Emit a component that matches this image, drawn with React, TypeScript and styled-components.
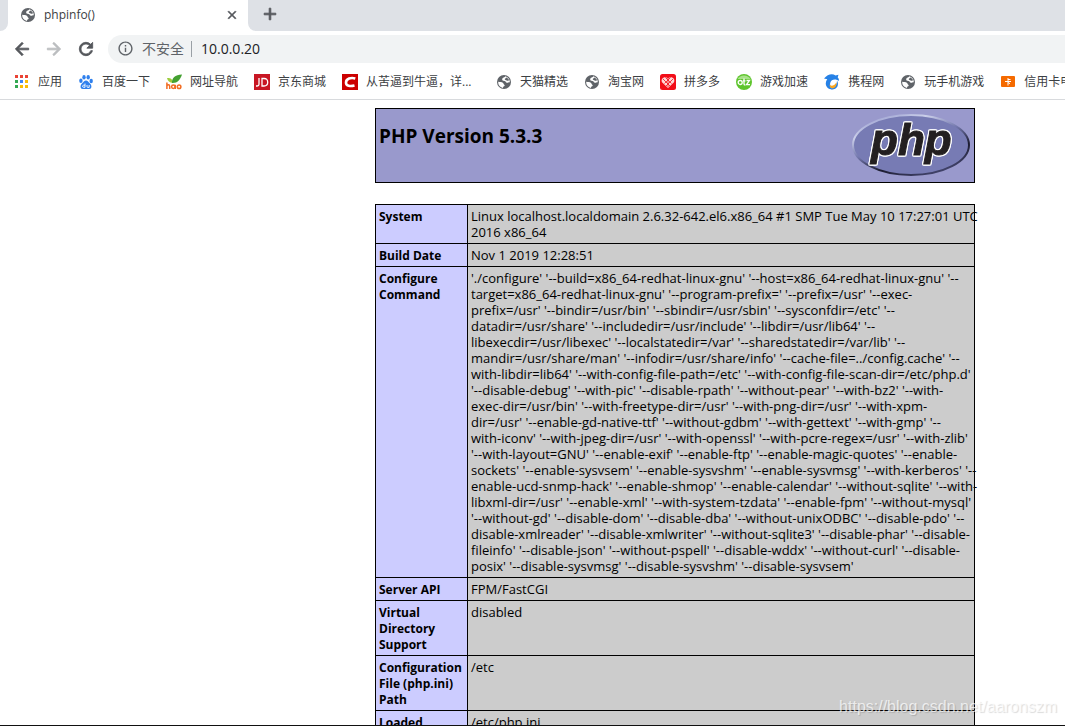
import React from 'react';
import styled, { createGlobalStyle } from 'styled-components';
import { MdArrowBack, MdArrowForward, MdRefresh, MdInfoOutline, MdClose, MdAdd } from 'react-icons/md';

const GlobalStyle = createGlobalStyle`
  * { box-sizing: border-box; }
  body {
    margin: 0;
    background: #fff;
    color: #000;
    font-family: "Open Sans", "Noto Sans CJK SC", sans-serif;
    overflow: hidden;
  }
`;

const Browser = styled.div`
  position: relative;
  display: flex;
  flex-direction: column;
  height: 100vh;
  overflow: hidden;
  border-bottom: 1px solid #111;
`;

const TabStrip = styled.div`
  display: flex;
  flex: none;
  height: 31px;
  background: #fff;
`;

const StripStart = styled.div`
  flex: none;
  width: 8px;
  border-bottom-right-radius: 8px;
  background: #dee1e6;
`;

const StripRest = styled.div`
  display: flex;
  flex: 1;
  padding-left: 6px;
  border-bottom-left-radius: 8px;
  background: #dee1e6;
`;

const Tab = styled.div`
  display: flex;
  align-items: center;
  flex: none;
  width: 240px;
  padding: 0 8px 2px 12px;
  background: #fff;
  font-size: 12px;
  color: #3c4043;
`;

const TabTitle = styled.span`
  flex: 1;
  margin-left: 8px;
`;

const IconButton = styled.button<{ $size?: number; $color?: string }>`
  display: flex;
  align-items: center;
  justify-content: center;
  flex: none;
  width: ${(p) => p.$size ?? 32}px;
  height: ${(p) => p.$size ?? 32}px;
  padding: 0;
  border: 0;
  background: none;
  color: ${(p) => p.$color ?? '#54575b'};

  path:not([fill="none"]) {
    stroke: currentColor;
    stroke-width: 1px;
  }
`;

const NewTab = styled(IconButton)`
  height: 28px;
`;

const Toolbar = styled.div`
  display: flex;
  align-items: center;
  flex: none;
  height: 36px;
  padding-left: 6px;
`;

const AddressBar = styled.div`
  display: flex;
  align-items: center;
  flex: 1;
  height: 28px;
  margin-left: 6px;
  padding: 0 0 1px 9px;
  border-radius: 14px 0 0 14px;
  background: #f1f3f4;
  color: #5f6368;
  font-size: 14px;
`;

const Security = styled.span`
  margin-left: 8px;
  padding-right: 7px;
  border-right: 1px solid #9aa0a6;
  line-height: 16px;
`;

const Address = styled.input`
  flex: 1;
  min-width: 0;
  padding: 0 0 0 9px;
  border: 0;
  outline: 0;
  background: none;
  color: #202124;
  font: inherit;
`;

const Bookmarks = styled.nav`
  display: flex;
  align-items: center;
  flex: none;
  gap: 16px;
  height: 33px;
  padding: 0 0 2px 14px;
  border-bottom: 1px solid #d8dadd;
  overflow: hidden;
`;

const Bookmark = styled.a<{ $width?: number }>`
  display: flex;
  align-items: center;
  flex: none;
  gap: 8px;
  width: ${(p) => (p.$width ? `${p.$width}px` : 'auto')};
  color: #3c4043;
  font-size: 12px;
  line-height: 16px;
  text-decoration: none;
  white-space: nowrap;
`;

const Page = styled.main`
  flex: 1;
  min-height: 0;
  padding: 8px 0 0 375px;
  overflow: hidden;
  font-size: 13px;
  line-height: 16px;
`;

const Banner = styled.header`
  display: flex;
  justify-content: space-between;
  align-items: flex-start;
  width: 600px;
  height: 75px;
  margin-bottom: 21px;
  padding: 3px;
  border: 1px solid #000;
  background: #9999cc;
`;

const Title = styled.h1`
  margin: 12px 0 0;
  font-size: 19px;
  line-height: 24px;
`;

const LogoText = styled.text`
  font-family: "Liberation Sans", sans-serif;
  font-size: 44px;
  font-weight: bold;
  font-style: italic;
  fill: #231f20;
  stroke: #231f20;
  stroke-width: 1px;
  filter: drop-shadow(1px 0 0 #fff) drop-shadow(-1px 0 0 #fff) drop-shadow(0 1px 0 #fff) drop-shadow(0 -1px 0 #fff);
`;

const InfoTable = styled.table`
  width: 600px;
  border-collapse: collapse;
  table-layout: fixed;
`;

const Name = styled.th`
  width: 92px;
  padding: 4px 3px 2px;
  border: 1px solid #000;
  background: #ccccff;
  font-size: 12px;
  text-align: left;
  vertical-align: top;
  white-space: pre;
`;

const Value = styled.td`
  padding: 3px;
  border: 1px solid #000;
  background: #cccccc;
  vertical-align: top;
  white-space: pre;
`;

const Watermark = styled.div`
  position: absolute;
  right: 8px;
  bottom: 8px;
  color: rgba(255, 255, 255, 0.7);
  font-family: "Liberation Sans", sans-serif;
  font-size: 16px;
  line-height: 20px;
  text-shadow: 1px 1px 1px rgba(0, 0, 0, 0.15);
`;

const Globe = () => (
  <svg width="16" height="16" viewBox="0 0 16 16">
    <circle cx="8" cy="8" r="7" fill="#5f6368" />
    <path
      d="M9.500 2.300C8.800 3.800 6.500 3.200 6.200 5c-.2 1.500.7 1.900 2.200 1.900 1.600.1 1.200 1.600 2.600 1.900 1.200.2 1.500-.8 2.800-.6.100-2.700-1.600-5-4.300-5.900z"
      fill="#fff"
    />
    <path d="M10.200 3.600c-.2 1.100-1.500.9-1.400 1.800.1.700 1.300.4 1.800 1 .5.500 1.500.3 2.600.2-.5-1.400-1.500-2.400-3-3z" fill="#5f6368" />
    <path d="M2.200 7.800c1.900.4 3.600.2 4.600 1 .9.700.6 1.500 1.500 1.900.9.500.2 1.500-.7 1.800-.6.300-.3.900-.7 1.400C4 13.300 2 11 2.200 7.800z" fill="#fff" />
  </svg>
);

const Apps = () => (
  <svg width="16" height="16" viewBox="0 0 16 16">
    {['#ea4335', '#ea4335', '#ea4335', '#34a853', '#4285f4', '#fbbc05', '#34a853', '#fbbc05', '#fbbc05'].map((c, i) => (
      <rect key={i} x={1 + (i % 3) * 5} y={1 + Math.floor(i / 3) * 5} width="3" height="3" fill={c} />
    ))}
  </svg>
);

const Baidu = () => (
  <svg width="16" height="16" viewBox="0 0 16 16" fill="#2f80ed">
    <ellipse cx="2.900" cy="6.700" rx="1.700" ry="2.200" />
    <ellipse cx="6" cy="3.300" rx="1.700" ry="2.300" />
    <ellipse cx="10.200" cy="3.300" rx="1.700" ry="2.300" />
    <ellipse cx="13.200" cy="7" rx="1.700" ry="2.200" />
    <path d="M8 6.500c1.800 0 2.500 1.700 4 3 2 1.700 2 5.500-.8 5.500H4.800C2 15 2 11.200 4 9.500c1.500-1.300 2.200-3 4-3z" />
    <path d="M7 9.500v3.800H5.500c-1.200 0-1.200-2.100 0-2.100H7M9 11v1.700q0 .7 1 .7h1.200V11" stroke="#fff" strokeWidth=".9" fill="none" />
  </svg>
);

const Hao = () => (
  <svg width="16" height="16" viewBox="0 0 16 16">
    <path d="M1 4c3.500-.2 5.500 1 6 5C3.500 8.500 1.700 7 1 4z" fill="#9ccc3c" />
    <path d="M16 .5C9 1 5.500 4 6 9c5.500.3 8-3 10-8.500z" fill="#43a030" />
    <g fill="none" stroke="#f26c22" strokeWidth="1.500">
      <path d="M.9 8.500v6.500M.9 12.500q0-1.700 1.400-1.700t1.400 1.700v2.500" />
      <circle cx="7.300" cy="12.800" r="1.700" />
      <path d="M9.300 10.800v4.200" />
      <circle cx="13.100" cy="12.800" r="1.800" />
    </g>
  </svg>
);

const Jd = () => (
  <svg width="16" height="16" viewBox="0 0 16 16">
    <rect width="16" height="16" fill="#c81623" />
    <path d="M2 12h1.200q1.800 0 1.800-1.800V4M8 4.500v7.500h2q3.700 0 3.700-3.800T10 4.500z" fill="none" stroke="#fff" strokeWidth="1.300" />
  </svg>
);

const Csdn = () => (
  <svg width="16" height="16" viewBox="0 0 16 16">
    <rect width="16" height="16" fill="#cc0000" />
    <path d="M13.300 4.500C9 3.300 4 4.500 4 8.700c0 3.500 4.500 3.800 8.500 2.800" fill="none" stroke="#fff" strokeWidth="2.600" />
  </svg>
);

const Pdd = () => (
  <svg width="16" height="16" viewBox="0 0 16 16">
    <rect width="16" height="16" rx="2.500" fill="#f20d18" />
    <path d="M8 14 2 8.200C.5 5 4 1.500 8 4.200 12 1.500 15.500 5 14 8.200z" fill="#ffd6d6" />
    <path d="m3 5 7 7M5.500 3.500l6 6M13 5l-7 7M10.500 3.500l-6 6M8 4v9" stroke="#f20d18" strokeWidth=".8" />
  </svg>
);

const Game = () => (
  <svg width="16" height="16" viewBox="0 0 16 16">
    <circle cx="8" cy="8" r="8" fill="#5fc52e" />
    <path d="M1.500 5a7.500 7 0 0 1 13 0z" fill="#a8e28a" />
    <g fill="none" stroke="#fff" strokeWidth="1.300">
      <circle cx="4.200" cy="8.500" r="2" />
      <path d="M8 4.500v5.500q0 1 1.200 1M6.800 6.800h2.700M10.500 6.500h3l-3 4.200h3.500" />
    </g>
  </svg>
);

const Ctrip = () => (
  <svg width="16" height="16" viewBox="0 0 16 16">
    <path d="M0 4.500C3.500.5 8-1 11.500 1.500l3-.8-.8 2.600q1.500 1.500 1.300 3.700C12 4.500 7 5 6.200 9c-.4 2.800.6 4.700 2.300 6.500C4 15.500 1.500 12.500 1.800 9q.1-2 1.500-3.800z" fill="#2681e6" />
    <path d="M13 6.500c2.500 4.500 0 9-5 9l-2-1c4 0 7-3 7-8z" fill="#2681e6" />
    <path d="M5.500 10.500q3 3.500 7-2c.3 4-2 5.800-4 5.800s-3-1.800-3-3.800z" fill="#f9a620" />
    <circle cx="9" cy="9" r="1.800" fill="#fff" />
  </svg>
);

const Card = () => (
  <svg width="16" height="16" viewBox="0 0 16 16">
    <rect x="1" y="2" width="14" height="11" rx="1" fill="#f56a00" />
    <path d="M8 4v7.500M8 5.500h2.500M5 7.500h6M8 8.500l2 1.200" stroke="#fff" strokeWidth="1" fill="none" />
  </svg>
);

const PhpLogo = () => (
  <svg width="120" height="67" viewBox="0 0 120 67" role="img" aria-label="PHP logo">
    <defs>
      <linearGradient id="rim" x1=".2" y1="0" x2=".8" y2="1">
        <stop offset="0" stopColor="#9a9fd0" />
        <stop offset=".2" stopColor="#ccd0ea" />
        <stop offset=".45" stopColor="#7277ac" />
        <stop offset=".7" stopColor="#1c1c30" />
        <stop offset="1" stopColor="#4a4c78" />
      </linearGradient>
    </defs>
    <ellipse cx="60" cy="33" rx="58" ry="30" fill="#777bb4" stroke="url(#rim)" strokeWidth="2" />
    <LogoText x="20" y="43">php</LogoText>
  </svg>
);

const bookmarks: { label: string; icon: React.ReactNode; width?: number }[] = [
  { label: '应用', icon: <Apps /> },
  { label: '百度一下', icon: <Baidu /> },
  { label: '网址导航', icon: <Hao /> },
  { label: '京东商城', icon: <Jd /> },
  { label: '从苦逼到牛逼，详...', icon: <Csdn />, width: 138 },
  { label: '天猫精选', icon: <Globe /> },
  { label: '淘宝网', icon: <Globe /> },
  { label: '拼多多', icon: <Pdd /> },
  { label: '游戏加速', icon: <Game /> },
  { label: '携程网', icon: <Ctrip /> },
  { label: '玩手机游戏', icon: <Globe /> },
  { label: '信用卡申请', icon: <Card /> },
];

const configure = `'./configure' '--build=x86_64-redhat-linux-gnu' '--host=x86_64-redhat-linux-gnu' '--
target=x86_64-redhat-linux-gnu' '--program-prefix=' '--prefix=/usr' '--exec-
prefix=/usr' '--bindir=/usr/bin' '--sbindir=/usr/sbin' '--sysconfdir=/etc' '--
datadir=/usr/share' '--includedir=/usr/include' '--libdir=/usr/lib64' '--
libexecdir=/usr/libexec' '--localstatedir=/var' '--sharedstatedir=/var/lib' '--
mandir=/usr/share/man' '--infodir=/usr/share/info' '--cache-file=../config.cache' '--
with-libdir=lib64' '--with-config-file-path=/etc' '--with-config-file-scan-dir=/etc/php.d'
'--disable-debug' '--with-pic' '--disable-rpath' '--without-pear' '--with-bz2' '--with-
exec-dir=/usr/bin' '--with-freetype-dir=/usr' '--with-png-dir=/usr' '--with-xpm-
dir=/usr' '--enable-gd-native-ttf' '--without-gdbm' '--with-gettext' '--with-gmp' '--
with-iconv' '--with-jpeg-dir=/usr' '--with-openssl' '--with-pcre-regex=/usr' '--with-zlib'
'--with-layout=GNU' '--enable-exif' '--enable-ftp' '--enable-magic-quotes' '--enable-
sockets' '--enable-sysvsem' '--enable-sysvshm' '--enable-sysvmsg' '--with-kerberos' '--
enable-ucd-snmp-hack' '--enable-shmop' '--enable-calendar' '--without-sqlite' '--with-
libxml-dir=/usr' '--enable-xml' '--with-system-tzdata' '--enable-fpm' '--without-mysql'
'--without-gd' '--disable-dom' '--disable-dba' '--without-unixODBC' '--disable-pdo' '--
disable-xmlreader' '--disable-xmlwriter' '--without-sqlite3' '--disable-phar' '--disable-
fileinfo' '--disable-json' '--without-pspell' '--disable-wddx' '--without-curl' '--disable-
posix' '--disable-sysvmsg' '--disable-sysvshm' '--disable-sysvsem'`;

const rows: [string, string][] = [
  ['System', 'Linux localhost.localdomain 2.6.32-642.el6.x86_64 #1 SMP Tue May 10 17:27:01 UTC\n2016 x86_64'],
  ['Build Date', 'Nov 1 2019 12:28:51'],
  ['Configure\nCommand', configure],
  ['Server API', 'FPM/FastCGI'],
  ['Virtual\nDirectory\nSupport', 'disabled'],
  ['Configuration\nFile (php.ini)\nPath', '/etc'],
  ['Loaded', '/etc/php.ini'],
];

export default function App() {
  return (
    <Browser>
      <GlobalStyle />
      <TabStrip>
        <StripStart />
        <Tab>
          <Globe />
          <TabTitle>phpinfo()</TabTitle>
          <IconButton $size={16} aria-label="Close tab"><MdClose size={14} /></IconButton>
        </Tab>
        <StripRest>
          <NewTab aria-label="New tab"><MdAdd size={20} /></NewTab>
        </StripRest>
      </TabStrip>
      <Toolbar>
        <IconButton aria-label="Back"><MdArrowBack size={20} /></IconButton>
        <IconButton aria-label="Forward" $color="#bbbdbf"><MdArrowForward size={20} /></IconButton>
        <IconButton aria-label="Reload"><MdRefresh size={20} /></IconButton>
        <AddressBar>
          <MdInfoOutline size={17} />
          <Security>不安全</Security>
          <Address aria-label="Address" defaultValue="10.0.0.20" />
        </AddressBar>
      </Toolbar>
      <Bookmarks>
        {bookmarks.map((b) => (
          <Bookmark key={b.label} href="#" $width={b.width}>
            {b.icon}
            {b.label}
          </Bookmark>
        ))}
      </Bookmarks>
      <Page>
        <Banner>
          <Title>PHP Version 5.3.3</Title>
          <PhpLogo />
        </Banner>
        <InfoTable>
          <tbody>
            {rows.map(([name, value]) => (
              <tr key={name}>
                <Name scope="row">{name}</Name>
                <Value>{value}</Value>
              </tr>
            ))}
          </tbody>
        </InfoTable>
      </Page>
      <Watermark>https://blog.csdn.net/aaronszm</Watermark>
    </Browser>
  );
}
